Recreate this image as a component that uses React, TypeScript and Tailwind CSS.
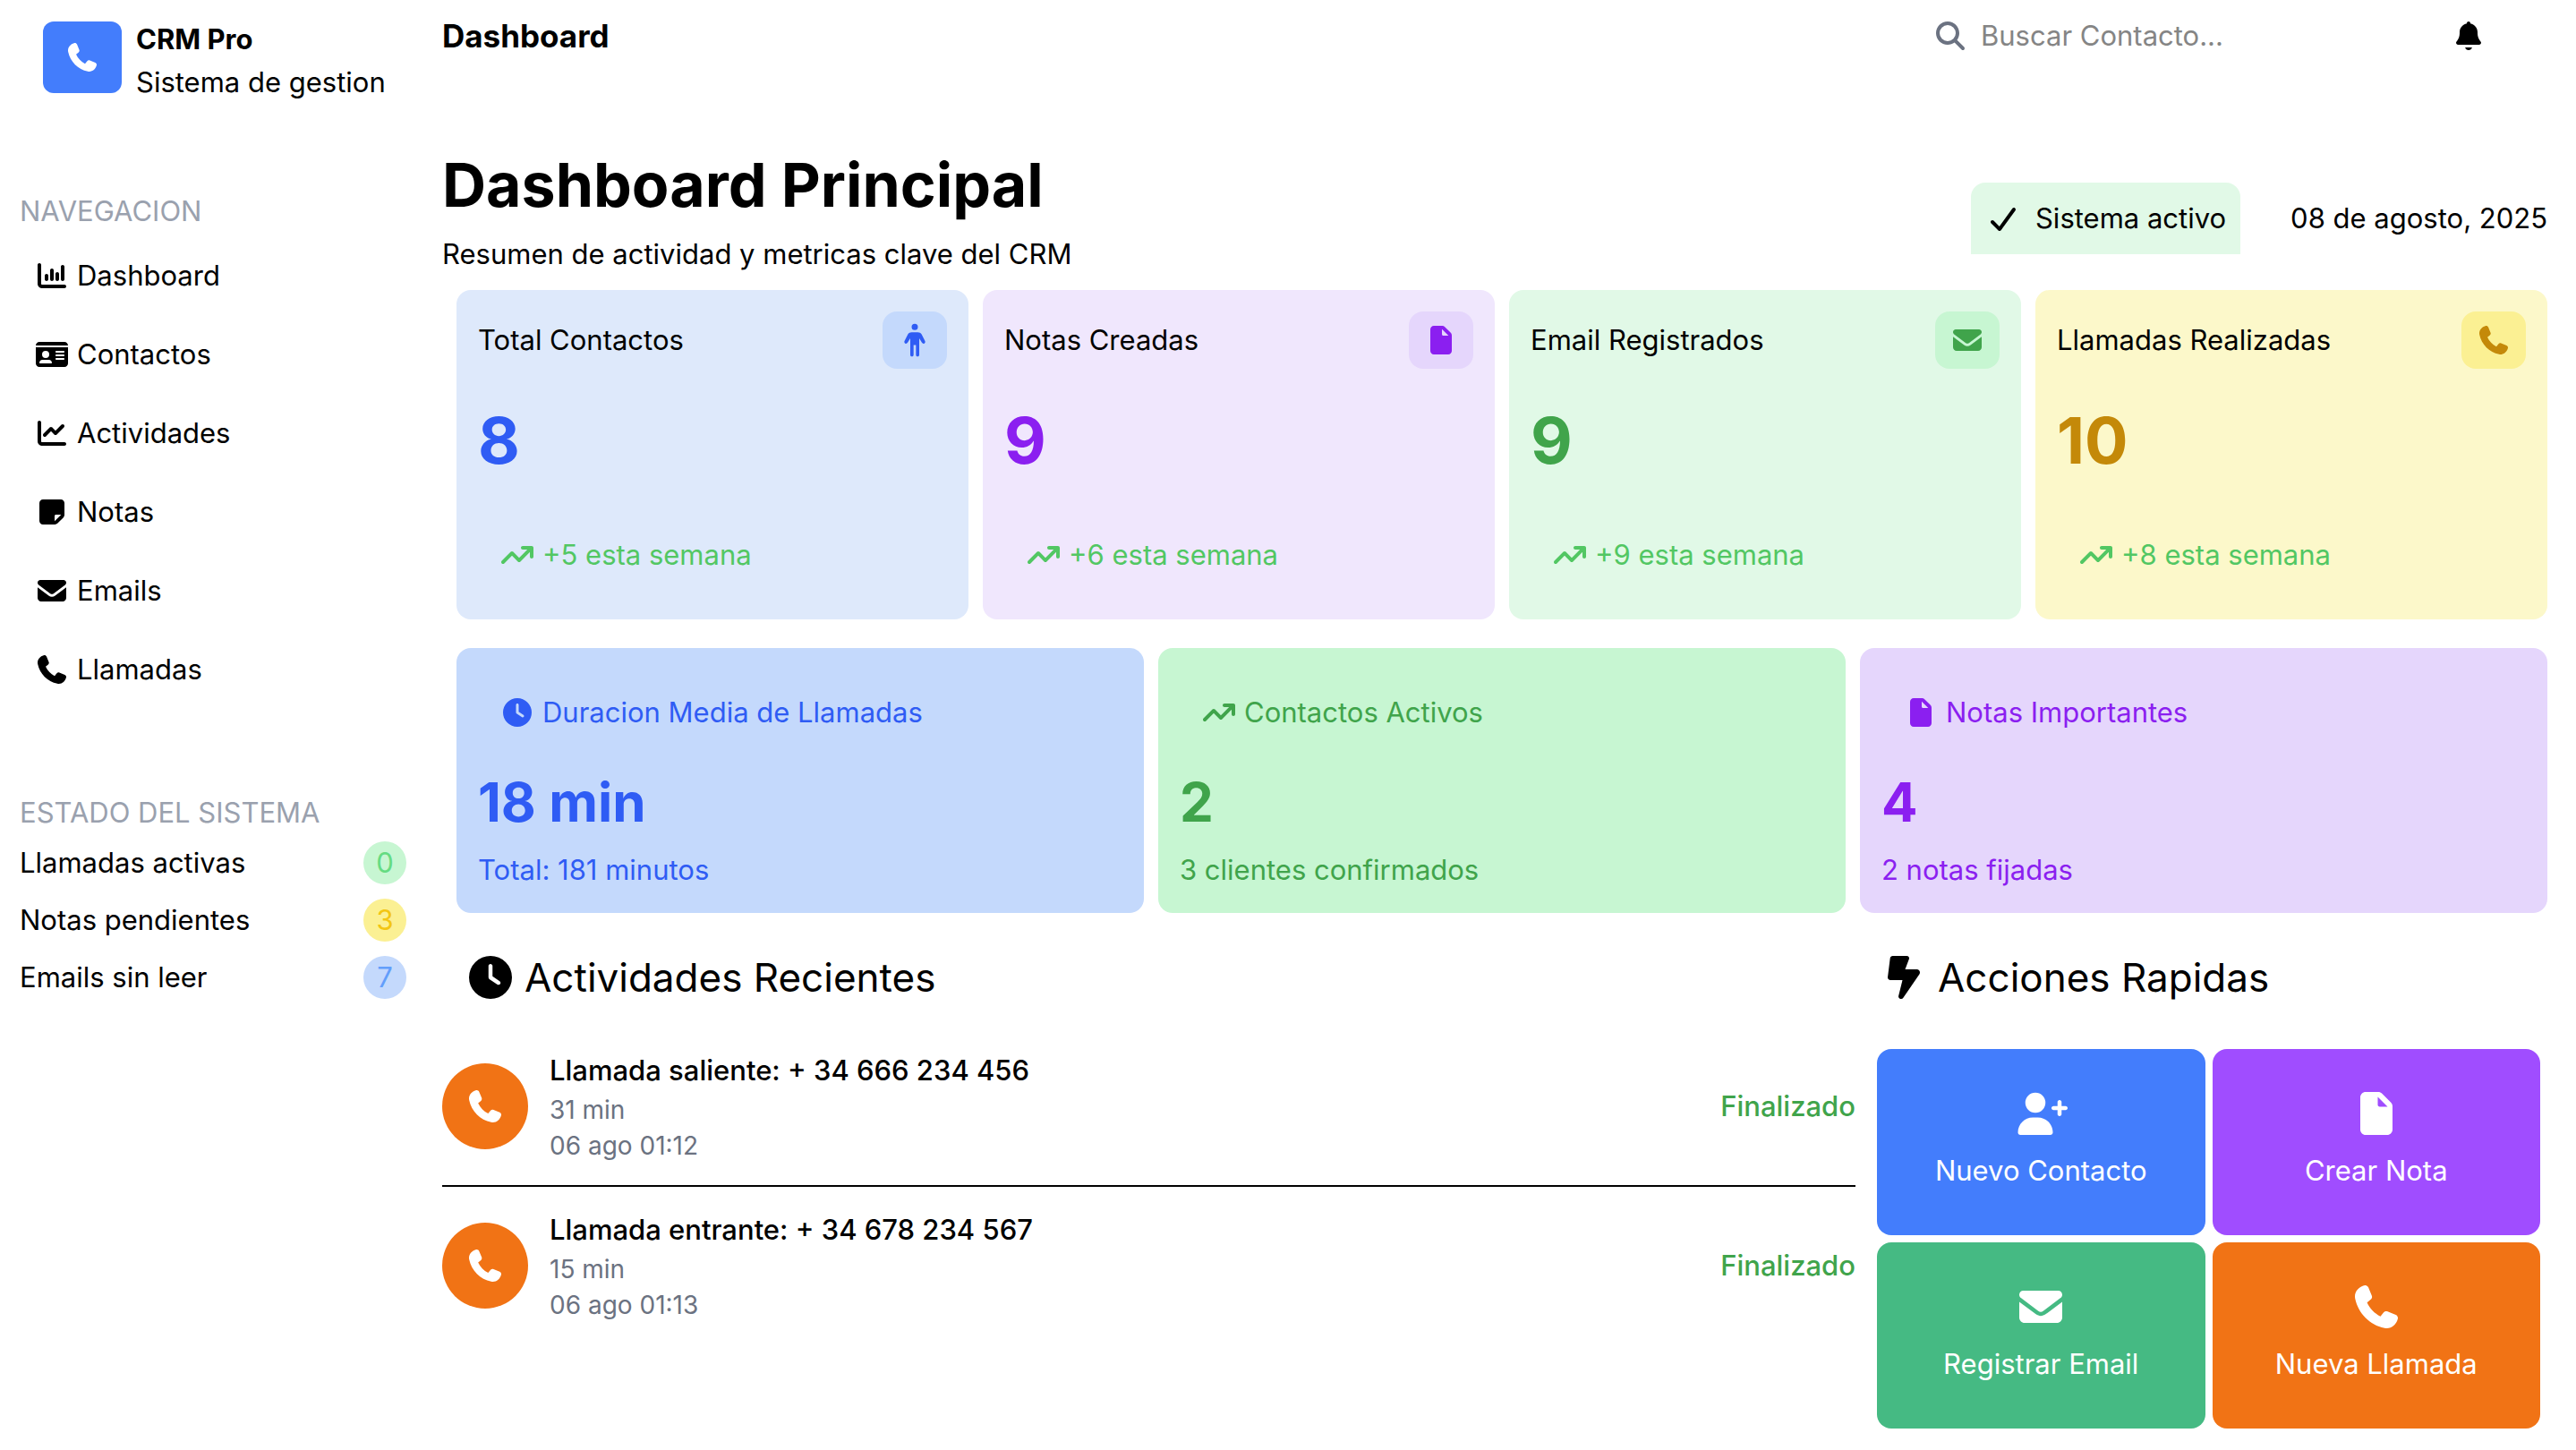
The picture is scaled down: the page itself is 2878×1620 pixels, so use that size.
import type { ReactNode } from "react";
import {
  FaArrowTrendUp,
  FaBoltLightning,
  FaChartColumn,
  FaChartLine,
  FaClock,
  FaIdCard,
  FaMagnifyingGlass,
} from "react-icons/fa6";

function Glyph({ viewBox, d, className }: { viewBox: string; d: string; className: string }) {
  return (
    <svg aria-hidden="true" viewBox={viewBox} fill="currentColor" className={className}>
      <path d={d} />
    </svg>
  );
}

type IconProps = { className?: string };

const Phone = ({ className = "h-8 w-10" }: IconProps) => (
  <Glyph
    className={className}
    viewBox="0 0 512 512"
    d="M160.2 25C152.3 6.1 131.7-3.9 112.1 1.4l-5.5 1.5c-64.6 17.6-119.8 80.2-103.7 156.4 37.1 175 174.8 312.7 349.8 349.8 76.3 16.2 138.8-39.1 156.4-103.7l1.5-5.5c5.4-19.7-4.7-40.3-23.5-48.1l-97.3-40.5c-16.5-6.9-35.6-2.1-47 11.8l-38.6 47.2C233.9 335.4 177.3 277 144.8 205.3L189 169.3c13.9-11.3 18.6-30.4 11.8-47L160.2 25z"
  />
);
const Bell = ({ className = "h-8 w-10" }: IconProps) => (
  <Glyph
    className={className}
    viewBox="0 0 448 512"
    d="M224 0c-17.7 0-32 14.3-32 32l0 3.2C119 50 64 114.6 64 192l0 21.7c0 48.1-16.4 94.8-46.4 132.4L7.8 358.3C2.7 364.6 0 372.4 0 380.5 0 400.1 15.9 416 35.5 416l376.9 0c19.6 0 35.5-15.9 35.5-35.5 0-8.1-2.7-15.9-7.8-22.2l-9.8-12.2C400.4 308.5 384 261.8 384 213.7l0-21.7c0-77.4-55-142-128-156.8l0-3.2c0-17.7-14.3-32-32-32zM162 464c7.1 27.6 32.2 48 62 48s54.9-20.4 62-48l-124 0z"
  />
);
const UserPlus = ({ className = "h-8 w-10" }: IconProps) => (
  <Glyph
    className={className}
    viewBox="0 0 640 512"
    d="M136 128a120 120 0 1 1 240 0 120 120 0 1 1 -240 0zM48 482.3C48 383.8 127.8 304 226.3 304l59.4 0c98.5 0 178.3 79.8 178.3 178.3 0 16.4-13.3 29.7-29.7 29.7L77.7 512C61.3 512 48 498.7 48 482.3zM544 96c13.3 0 24 10.7 24 24l0 48 48 0c13.3 0 24 10.7 24 24s-10.7 24-24 24l-48 0 0 48c0 13.3-10.7 24-24 24s-24-10.7-24-24l0-48-48 0c-13.3 0-24-10.7-24-24s10.7-24 24-24l48 0 0-48c0-13.3 10.7-24 24-24z"
  />
);
const File = ({ className = "h-8 w-10" }: IconProps) => (
  <Glyph
    className={className}
    viewBox="0 0 384 512"
    d="M0 64C0 28.7 28.7 0 64 0L213.5 0c17 0 33.3 6.7 45.3 18.7L365.3 125.3c12 12 18.7 28.3 18.7 45.3L384 448c0 35.3-28.7 64-64 64L64 512c-35.3 0-64-28.7-64-64L0 64zm208-5.5l0 93.5c0 13.3 10.7 24 24 24L325.5 176 208 58.5z"
  />
);
const Envelope = ({ className = "h-8 w-10" }: IconProps) => (
  <Glyph
    className={className}
    viewBox="0 0 512 512"
    d="M48 64c-26.5 0-48 21.5-48 48 0 15.1 7.1 29.3 19.2 38.4l208 156c17.1 12.8 40.5 12.8 57.6 0l208-156c12.1-9.1 19.2-23.3 19.2-38.4 0-26.5-21.5-48-48-48L48 64zM0 196L0 384c0 35.3 28.7 64 64 64l384 0c35.3 0 64-28.7 64-64l0-188-198.4 148.8c-34.1 25.6-81.1 25.6-115.2 0L0 196z"
  />
);
const Note = ({ className = "h-8 w-10" }: IconProps) => (
  <Glyph
    className={className}
    viewBox="0 0 448 512"
    d="M64 480c-35.3 0-64-28.7-64-64L0 96C0 60.7 28.7 32 64 32l320 0c35.3 0 64 28.7 64 64l0 213.5c0 17-6.7 33.3-18.7 45.3L322.7 461.3c-12 12-28.3 18.7-45.3 18.7L64 480zM389.5 304L296 304c-13.3 0-24 10.7-24 24l0 93.5 117.5-117.5z"
  />
);
const Check = ({ className = "h-8 w-10" }: IconProps) => (
  <Glyph
    className={className}
    viewBox="0 0 448 512"
    d="M434.8 70.1c14.3 10.4 17.5 30.4 7.1 44.7l-256 352c-5.5 7.6-14 12.3-23.4 13.1s-18.5-2.7-25.1-9.3l-128-128c-12.5-12.5-12.5-32.8 0-45.3s32.8-12.5 45.3 0l101.5 101.5 234-321.7c10.4-14.3 30.4-17.5 44.7-7.1z"
  />
);
const Person = ({ className = "size-10" }: IconProps) => (
  <Glyph
    className={className}
    viewBox="0 0 120 120"
    d="M60 5.500a10.500 10.500 0 1 1 0 21 10.500 10.500 0 1 1 0-21zM50 33.500h20c6 0 10 2 13 7l11 22c2 4 1 7-2 8.500s-6 .500-8-2.500l-9-14.500v54.500c0 4-2 6-5.500 6s-5.500-2-5.500-6v-32h-8v32c0 4-2 6-5.500 6s-5.500-2-5.500-6v-54.500l-9 14.500c-2 3-5 4-8 2.500s-4-4.500-2-8.500l11-22c3-5 7-7 13-7z"
  />
);

const navItems: { label: string; icon: ReactNode }[] = [
  { label: "Dashboard", icon: <FaChartColumn className="h-8 w-10" /> },
  { label: "Contactos", icon: <FaIdCard className="h-8 w-10" /> },
  { label: "Actividades", icon: <FaChartLine className="h-8 w-10" /> },
  { label: "Notas", icon: <Note /> },
  { label: "Emails", icon: <Envelope /> },
  { label: "Llamadas", icon: <Phone /> },
];

const systemState = [
  { label: "Llamadas activas", value: 0, tone: "bg-[#c7f6d2] text-[#65dc82]" },
  { label: "Notas pendientes", value: 3, tone: "bg-[#fbf093] text-[#f3c614]" },
  { label: "Emails sin leer", value: 7, tone: "bg-[#c4d9fc] text-[#629efb]" },
];

const stats = [
  {
    title: "Total Contactos",
    value: 8,
    week: "+5 esta semana",
    card: "bg-[#dee9fb]",
    chip: "bg-[#c4d9fc]",
    ink: "text-[#2f5cf4]",
    icon: <Person />,
  },
  {
    title: "Notas Creadas",
    value: 9,
    week: "+6 esta semana",
    card: "bg-[#f0e7fd]",
    chip: "bg-[#e5d6fc]",
    ink: "text-[#8b1ff0]",
    icon: <File />,
  },
  {
    title: "Email Registrados",
    value: 9,
    week: "+9 esta semana",
    card: "bg-[#e1f9e7]",
    chip: "bg-[#c7f6d2]",
    ink: "text-[#40a44b]",
    icon: <Envelope />,
  },
  {
    title: "Llamadas Realizadas",
    value: 10,
    week: "+8 esta semana",
    card: "bg-[#fcf8ca]",
    chip: "bg-[#fbf093]",
    ink: "text-[#c48909]",
    icon: <Phone />,
  },
];

const summaries = [
  {
    title: "Duracion Media de Llamadas",
    value: "18 min",
    note: "Total: 181 minutos",
    tone: "bg-[#c4d9fc] text-[#2f5cf4]",
    icon: <FaClock className="h-8 w-10" />,
  },
  {
    title: "Contactos Activos",
    value: "2",
    note: "3 clientes confirmados",
    tone: "bg-[#c7f6d2] text-[#40a44b]",
    icon: <FaArrowTrendUp className="h-8 w-10" />,
  },
  {
    title: "Notas Importantes",
    value: "4",
    note: "2 notas fijadas",
    tone: "bg-[#e5d6fc] text-[#8b1ff0]",
    icon: <File />,
  },
];

const activities = [
  { title: "Llamada saliente: + 34 666 234 456", length: "31 min", date: "06 ago 01:12" },
  { title: "Llamada entrante: + 34 678 234 567", length: "15 min", date: "06 ago 01:13" },
];

const actions = [
  { label: "Nuevo Contacto", tone: "bg-[#437dfc]", icon: <UserPlus className="h-12 w-15" /> },
  { label: "Crear Nota", tone: "bg-[#a04dff]", icon: <File className="h-12 w-15" /> },
  { label: "Registrar Email", tone: "bg-[#45ba83]", icon: <Envelope className="h-12 w-15" /> },
  { label: "Nueva Llamada", tone: "bg-[#f17315]", icon: <Phone className="h-12 w-15" /> },
];

function Sidebar() {
  return (
    <aside className="w-[454px] shrink-0">
      <div className="flex items-start gap-4 pt-5 pl-12">
        <div className="mt-1 flex h-20 w-22 items-center justify-center rounded-xl bg-[#437dfc] text-white">
          <Phone />
        </div>
        <div className="whitespace-nowrap">
          <p className="font-bold">CRM Pro</p>
          <p>Sistema de gestion</p>
        </div>
      </div>

      <nav aria-labelledby="nav-title" className="mt-24 pl-[22px]">
        <h2 id="nav-title" className="text-[#9aa1ae]">NAVEGACION</h2>
        <ul className="mt-1 flex flex-col">
          {navItems.map((item) => (
            <li key={item.label}>
              <a href="#" className="flex h-22 items-center gap-2 pl-4">
                {item.icon}
                {item.label}
              </a>
            </li>
          ))}
        </ul>
      </nav>

      <section aria-labelledby="state-title" className="mt-23 pl-[22px]">
        <h2 id="state-title" className="text-[#9aa1ae]">ESTADO DEL SISTEMA</h2>
        <ul className="mt-2 flex flex-col gap-4">
          {systemState.map((row) => (
            <li key={row.label} className="flex items-center justify-between">
              <span>{row.label}</span>
              <span className={`flex size-12 items-center justify-center rounded-full ${row.tone}`}>{row.value}</span>
            </li>
          ))}
        </ul>
      </section>
    </aside>
  );
}

function TopBar() {
  return (
    <header className="flex h-20 items-center">
      <p className="flex-1 text-[35px] font-bold">Dashboard</p>
      <label className="flex items-center gap-3.5 text-[#6b7281]">
        <FaMagnifyingGlass className="h-8 w-10" />
        <input
          type="search"
          aria-label="Buscar contacto"
          placeholder="Buscar Contacto..."
          className="w-[525px] outline-none placeholder:text-[#858585]"
        />
      </label>
      <button type="button" aria-label="Notificaciones" className="mr-17">
        <Bell />
      </button>
    </header>
  );
}

export default function App() {
  return (
    <div className="flex min-h-screen gap-10 bg-white pr-8 font-['Inter',sans-serif] text-[31px] leading-[48px] text-black">
      <Sidebar />
      <div className="min-w-0 flex-1">
        <TopBar />
        <main>
          <div className="mt-20 flex items-end justify-between">
            <div>
              <h1 className="text-[68px] leading-[92px] font-bold">Dashboard Principal</h1>
              <p className="mt-2">Resumen de actividad y metricas clave del CRM</p>
            </div>
            <div className="mb-6 flex items-center gap-14">
              <p className="flex h-20 items-center gap-4 rounded-t-2xl bg-[#e1f9e7] px-4">
                <Check />
                Sistema activo
              </p>
              <p>08 de agosto, 2025</p>
            </div>
          </div>

          <div className="mt-4 grid grid-cols-4 gap-4 pl-4">
            {stats.map((s) => (
              <section key={s.title} className={`rounded-2xl p-6 ${s.card}`}>
                <div className="flex items-center justify-between">
                  <h2>{s.title}</h2>
                  <span className={`flex h-16 w-18 items-center justify-center rounded-2xl ${s.chip} ${s.ink}`}>{s.icon}</span>
                </div>
                <p className={`mt-8 text-[72px] leading-[96px] font-bold ${s.ink}`}>{s.value}</p>
                <p className="mt-8 flex h-24 items-center gap-2 pl-6 text-[#52c763]">
                  <FaArrowTrendUp className="h-8 w-10" />
                  {s.week}
                </p>
              </section>
            ))}
          </div>

          <div className="mt-8 grid grid-cols-3 gap-4 pl-4">
            {summaries.map((s) => (
              <section key={s.title} className={`rounded-2xl p-6 ${s.tone}`}>
                <h2 className="flex h-24 items-center gap-2 pl-6">
                  {s.icon}
                  {s.title}
                </h2>
                <p className="mt-4 text-[60px] leading-[72px] font-bold">{s.value}</p>
                <p className="mt-4">{s.note}</p>
              </section>
            ))}
          </div>

          <div className="mt-6 flex gap-6">
            <section className="flex-1">
              <h2 className="flex h-24 items-center gap-2 pl-6 text-[44px]">
                <FaClock className="h-12 w-15" />
                Actividades Recientes
              </h2>
              <ul className="mt-2 divide-y-2 divide-black">
                {activities.map((a) => (
                  <li key={a.title} className="flex items-center gap-6 py-6">
                    <span className="flex size-24 items-center justify-center rounded-full bg-[#f17315] text-white">
                      <Phone className="size-9" />
                    </span>
                    <div className="flex-1">
                      <p className="font-medium">{a.title}</p>
                      <p className="text-[28px] leading-[40px] text-[#6b7281]">{a.length}</p>
                      <p className="text-[28px] leading-[40px] text-[#6b7281]">{a.date}</p>
                    </div>
                    <p className="font-medium text-[#40a44b]">Finalizado</p>
                  </li>
                ))}
              </ul>
            </section>
            <section className="w-[749px] pr-2">
              <h2 className="flex h-24 items-center gap-2 text-[44px]">
                <FaBoltLightning className="h-12 w-15" />
                Acciones Rapidas
              </h2>
              <div className="mt-8 grid grid-cols-2 gap-2">
                {actions.map((a) => (
                  <button
                    key={a.label}
                    type="button"
                    className={`flex h-52 flex-col items-center justify-center gap-4 rounded-2xl text-white ${a.tone}`}
                  >
                    {a.icon}
                    {a.label}
                  </button>
                ))}
              </div>
            </section>
          </div>
        </main>
      </div>
    </div>
  );
}
